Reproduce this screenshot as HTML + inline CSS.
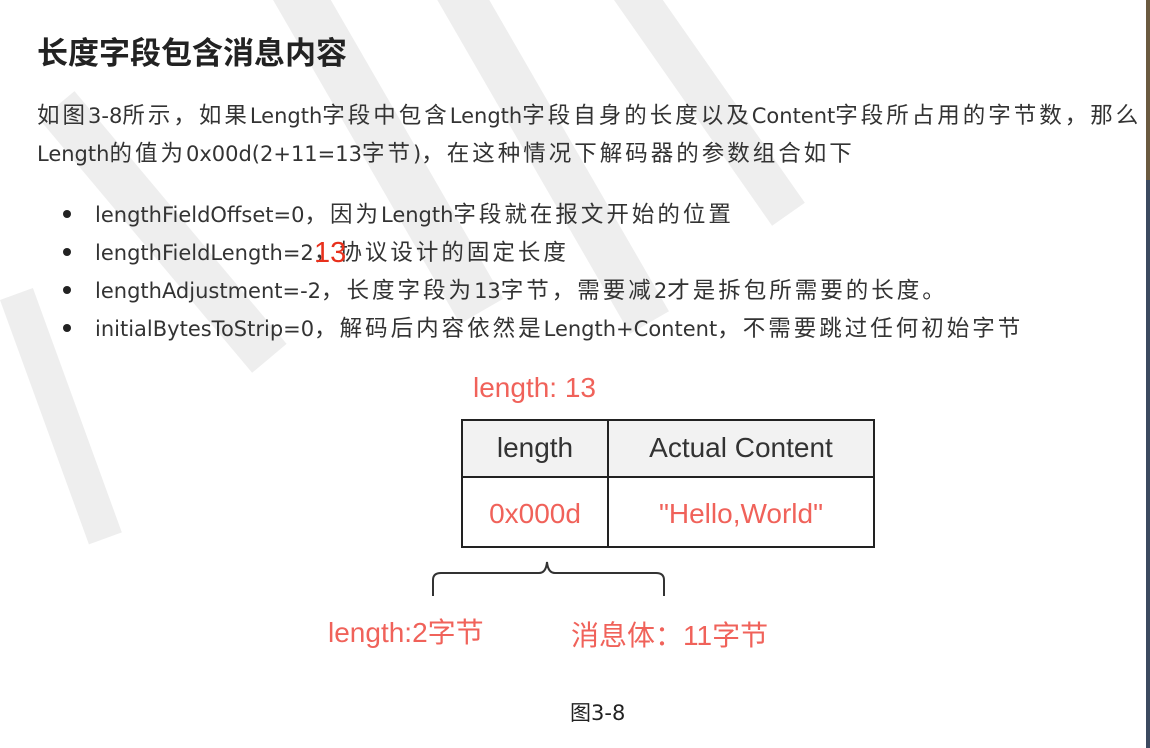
<!DOCTYPE html>
<html><head><meta charset="utf-8"><style>
body{margin:0;width:1150px;height:748px;overflow:hidden;background:#fff;position:relative;font-family:"Liberation Sans","Noto Sans CJK SC",sans-serif;color:#333}
.wm{position:absolute;background:#eeeeee;transform-origin:0 0}
.t{position:absolute;white-space:nowrap}
h1{position:absolute;left:37px;top:30px;margin:0;font-size:31px;font-weight:bold;color:#222;font-family:"Noto Sans CJK SC",sans-serif;line-height:42px}
.p{font-size:21px;color:#333;font-family:"DejaVu Sans","Noto Sans CJK SC",sans-serif;line-height:30px}
.p b{font-weight:normal;font-size:22.5px;letter-spacing:3px;font-family:"Noto Sans CJK SC",sans-serif}
.dot{position:absolute;width:8px;height:8px;border-radius:50%;background:#222}
.red{color:#f0625a}
</style></head><body>
<div class="wm" style="left:250px;top:-40px;width:50px;height:420px;transform:rotate(-30deg)"></div>
<div class="wm" style="left:420px;top:-30px;width:45px;height:420px;transform:rotate(-30deg)"></div>
<div class="wm" style="left:40px;top:120px;width:45px;height:330px;transform:rotate(-40deg)"></div>
<div class="wm" style="left:600px;top:-20px;width:40px;height:300px;transform:rotate(-35deg)"></div>
<div class="wm" style="left:0px;top:300px;width:35px;height:260px;transform:rotate(-20deg)"></div>
<div style="position:absolute;left:281px;top:365px;width:865px;height:303px;background:#fff"></div>
<div style="position:absolute;left:1146px;top:0;width:4px;height:180px;background:#6b5a40"></div>
<div style="position:absolute;left:1146px;top:180px;width:4px;height:568px;background:#3c4a60"></div>
<h1>长度字段包含消息内容</h1>
<div class="t p" style="left:37px;top:99px"><b>如图</b>3-8<b>所示，如果</b>Length<b>字段中包含</b>Length<b>字段自身的长度以及</b>Content<b>字段所占用的字节数，那么</b></div>
<div class="t p" style="left:37px;top:137px">Length<b>的值为</b>0x00d(2+11=13<b>字节</b>)<b>，在这种情况下解码器的参数组合如下</b></div>
<div class="dot" style="left:63px;top:210px"></div>
<div class="dot" style="left:63px;top:248px"></div>
<div class="dot" style="left:63px;top:286px"></div>
<div class="dot" style="left:63px;top:324px"></div>
<div class="t p" style="left:95px;top:198px">lengthFieldOffset=0<b>，因为</b>Length<b>字段就在报文开始的位置</b></div>
<div class="t p" style="left:95px;top:236px">lengthFieldLength=2<b>，协议设计的固定长度</b></div>
<div class="t" style="left:314px;top:237px;font-size:29px;color:#e8301c">13</div>
<div class="t p" style="left:95px;top:274px">lengthAdjustment=-2<b>，长度字段为</b>13<b>字节，需要减</b>2<b>才是拆包所需要的长度。</b></div>
<div class="t p" style="left:95px;top:312px">initialBytesToStrip=0<b>，解码后内容依然是</b>Length+Content<b>，不需要跳过任何初始字节</b></div>
<div class="t red" style="left:473px;top:372px;font-size:28px">length: 13</div>
<div style="position:absolute;left:461px;top:419px;width:414px;height:129px;border:2px solid #222;box-sizing:border-box"></div>
<div style="position:absolute;left:463px;top:421px;width:410px;height:55px;background:#f2f2f2"></div>
<div style="position:absolute;left:461px;top:476px;width:414px;height:2px;background:#222"></div>
<div style="position:absolute;left:607px;top:419px;width:2px;height:129px;background:#222"></div>
<div class="t" style="left:463px;top:432px;width:144px;text-align:center;font-size:28px;color:#333">length</div>
<div class="t" style="left:609px;top:432px;width:264px;text-align:center;font-size:28px;color:#333">Actual Content</div>
<div class="t red" style="left:463px;top:498px;width:144px;text-align:center;font-size:28px">0x000d</div>
<div class="t red" style="left:609px;top:498px;width:264px;text-align:center;font-size:28px">"Hello,World"</div>
<svg style="position:absolute;left:425px;top:558px" width="250" height="42"><path d="M8 38 V22 Q8 15 16 15 H114 Q121 15 122 4 Q123 15 130 15 H231 Q239 15 239 22 V38" fill="none" stroke="#333" stroke-width="2"/></svg>
<div class="t red" style="left:328px;top:611px;font-size:28px">length:2字节</div>
<div class="t red" style="left:571px;top:614px;font-size:28px">消息体：11字节</div>
<div class="t" style="left:570px;top:697px;font-size:21px;color:#222;font-family:'DejaVu Sans','Noto Sans CJK SC',sans-serif">图3-8</div>
</body></html>
